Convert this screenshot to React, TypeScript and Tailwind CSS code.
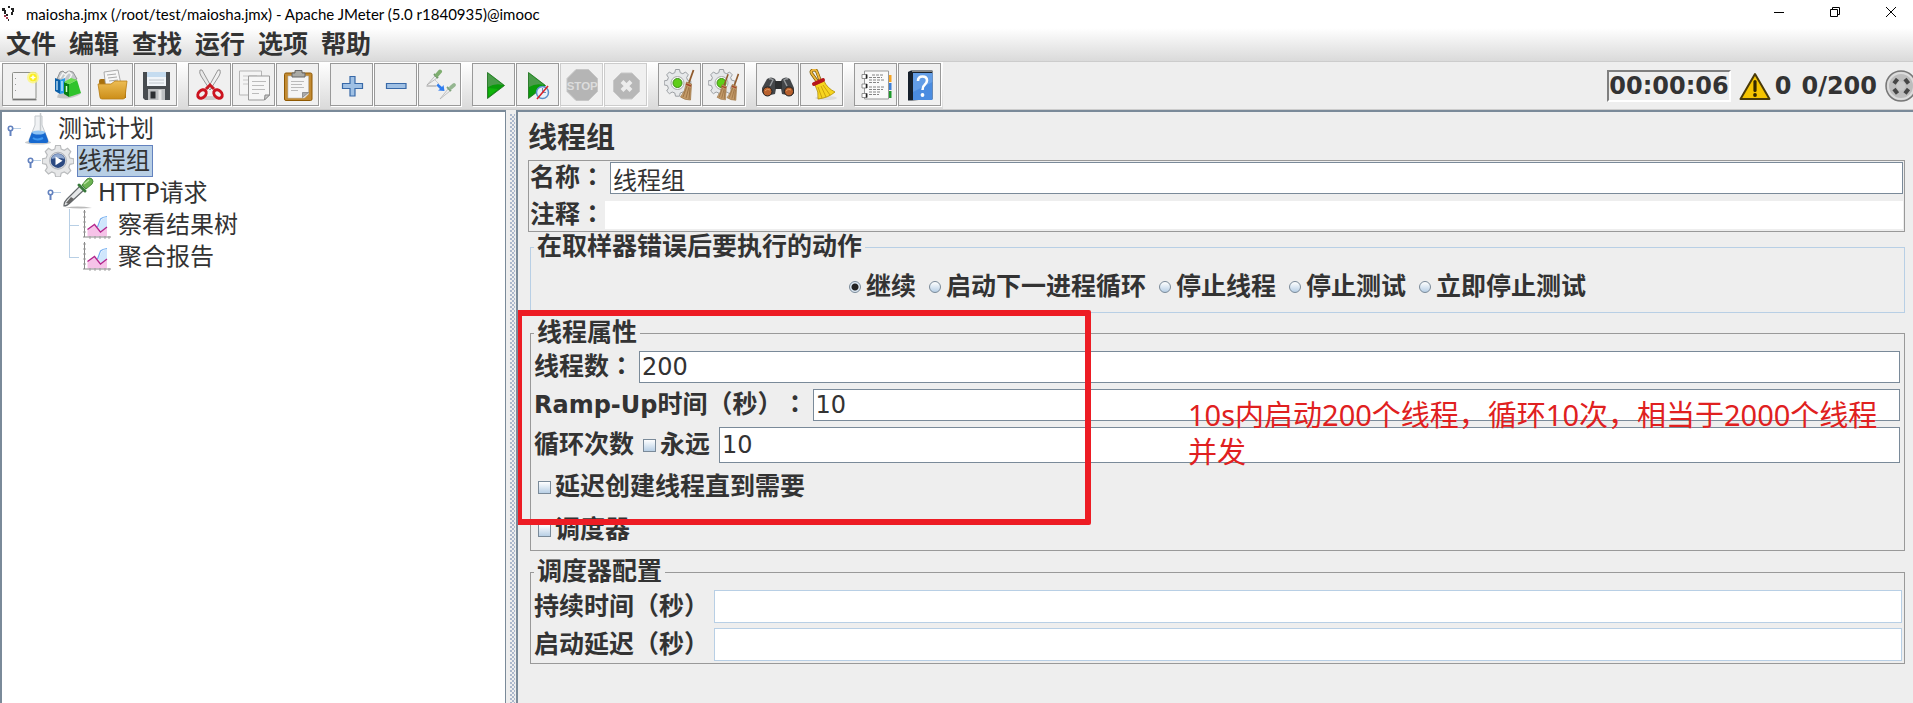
import React, { useState } from "react";

interface IconProps {
  children: React.ReactNode;
  className?: string;
}

const Icon: React.FunctionComponent<IconProps> = ({
  children,
  className = "h-8 w-8",
}) => (
  <svg viewBox="0 0 32 32" className={`${className} shrink-0`} fill="none" aria-hidden="true">
    {children}
  </svg>
);

const NewIcon = () => (
  <Icon>
    <rect x="4.5" y="3.5" width="23.5" height="26.5" rx="1" fill="#f3f3f3" stroke="#8d8f8a" />
    <path d="M4.500 30.800h24" stroke="#555" />
    <path d="M7.500 9v1M7.500 15v1M7.500 21v1" stroke="#999" />
    <circle cx="25" cy="8.500" r="6" fill="#fdf67a" opacity=".8" />
    <circle cx="25" cy="8.500" r="3.800" fill="#fbee1e" />
    <path d="m25 5.500.9 2.100 2.100.9-2.100.9-.9 2.100-.9-2.100-2.100-.9 2.100-.9z" fill="#fffef0" />
  </Icon>
);

const TemplatesIcon = () => (
  <Icon>
    <path d="M5 28.500c7 2 18 1 24-4l-3-4-20 5z" fill="#999" opacity=".5" />
    <path d="M5 10 8 3l3-1 2 2 4-2 4 1 4 7-8 4z" fill="#c4c8cb" stroke="#777" strokeWidth=".7" />
    <path d="m8 9 3-5 3 2 3-3 3 3M11 11l3-5m3 5 3-6" stroke="#f4f4f4" strokeWidth="1.500" />
    <path d="m3 9 5 2v14l-5-3z" fill="#0b5fa8" />
    <path d="m8 11 5-2v15l-5 1z" fill="#2a9be8" />
    <path d="M5 12v9m5-9v10" stroke="#d8f0ff" strokeWidth="1.200" />
    <path d="m12 13 5 2v13l-5-3z" fill="#087f12" />
    <path d="m17 15 8-4 4 13-12 4z" fill="#2fc32b" />
    <path d="m12 13 7-4 6 2-8 4z" fill="#69de4e" />
    <path d="M14.500 17v6" stroke="#d6ffd0" strokeWidth="1.500" />
  </Icon>
);

const OpenIcon = () => (
  <Icon>
    <path d="M3 12q0-2 2-2h6l2 3h15q2 0 2 2v14H4z" fill="#a8700d" />
    <path d="m8 3 14-2 4 19H10z" fill="#f7f7f7" stroke="#999" strokeWidth=".8" />
    <path d="m11 6 9-1m-8 4 9-1m-8 4 9-1" stroke="#aaa" />
    <path d="M2 15h13l4-3h12l-2 16q0 2-2 2H6q-2 0-2-2z" fill="url(#folder)" stroke="#b97f16" strokeWidth=".8" />
    <defs>
      <linearGradient id="folder" x2="0" y2="1">
        <stop stopColor="#edbd55" />
        <stop offset="1" stopColor="#cc8e18" />
      </linearGradient>
    </defs>
  </Icon>
);

const SaveIcon = () => (
  <Icon>
    <path d="M3 3h27v28H5l-2-2z" fill="#484c50" />
    <path d="M7 3h19v14H7z" fill="#f1f5f9" />
    <path d="M7 3h19v5H7z" fill="#c5dcf0" />
    <path d="M9 11h15m-15 3h15" stroke="#c2c8ce" />
    <path d="M8 20h17v11H8z" fill="#bdbfc1" />
    <path d="M10.500 22.500h5v7h-5z" fill="#2d2f32" />
    <path d="M20 21v10" stroke="#e6e6e6" strokeWidth="3" />
  </Icon>
);

const CutIcon = () => (
  <Icon>
    <ellipse cx="16" cy="29" rx="9" ry="2" fill="#ccc" />
    <path d="M6 1q-1 3 1 6l9 14 2-2L8 1z" fill="#e9e9e9" stroke="#8c8c8c" strokeWidth=".9" />
    <path d="M26 1q1 3-1 6l-9 14-2-2L24 1z" fill="#f1f1f1" stroke="#8c8c8c" strokeWidth=".9" />
    <path d="m12 20 4-4 4 4" stroke="#c81a22" strokeWidth="3" />
    <ellipse cx="8" cy="25" rx="3.500" ry="4.800" transform="rotate(45 8 25)" stroke="#cc1420" strokeWidth="3" />
    <ellipse cx="24" cy="25" rx="3.500" ry="4.800" transform="rotate(-45 24 25)" stroke="#cc1420" strokeWidth="3" />
  </Icon>
);

const CopyIcon = () => (
  <Icon>
    <path d="M1.500 2h22v24h-22z" fill="#f4f4f4" stroke="#b5b5b5" />
    <path d="M5 7h14M5 11h6M5 15h5" stroke="#c8c8c8" />
    <path d="M10.500 7h21v19l-5 5h-16z" fill="#f6f6f6" stroke="#999" />
    <path d="M14 12.500h14M14 16.500h12M14 20.500h13M14 24.500h7" stroke="#bbb" />
    <path d="m26.500 31 .5-5 4.500 0z" fill="#ccc" stroke="#888" />
  </Icon>
);

const PasteIcon = () => (
  <Icon>
    <rect x="2.500" y="4" width="27.500" height="27.500" rx="1.500" fill="#c28a32" stroke="#8f5902" />
    <path d="M6 7h20.500v18l-4 4H6z" fill="#f5f5f5" stroke="#b8b8b8" strokeWidth=".6" />
    <path d="M9 12.500h13M9 15.500h11M9 18.500h13M9 21.500h7" stroke="#bbb" />
    <path d="M20.500 28.500v-5h6z" fill="#aaa" stroke="#777" strokeWidth=".7" />
    <path d="M10 8V4h3V1.500h7V4h3v4z" fill="#aaaaa5" stroke="#666" />
  </Icon>
);

const PlusIcon = () => (
  <Icon>
    <path d="M14 7.500h5v7h7.500v5H19v7.500h-5v-7.500H6.500v-5H14z" fill="#9fc0e4" stroke="#3869a8" strokeWidth="1.200" />
  </Icon>
);

const MinusIcon = () => (
  <Icon>
    <path d="M6.500 14.500h19.500v5H6.500z" fill="#9fc0e4" stroke="#3869a8" strokeWidth="1.200" />
  </Icon>
);

const ToggleIcon = () => (
  <Icon>
    <path d="m3 16 8-9 2 2z" fill="#f4f4f4" stroke="#aaa" strokeWidth=".8" />
    <path d="m10 5 4 4" stroke="#6f9a68" strokeWidth="2" />
    <path d="m13 6 3-3.500" stroke="#7fae70" strokeWidth="4" strokeLinecap="round" />
    <path d="M2.500 17h10" stroke="#999" />
    <path d="m10 10 5 5" stroke="#ccc" />
    <path d="m14 14.500 4 3.500 1.500-2 1 6-6.500-.5 2-1.500-3.500-3.500z" fill="#2f7df0" />
    <path d="m16 30 8-10 2 2z" fill="#eee" stroke="#b5b5b5" strokeWidth=".8" />
    <path d="m23 18 4 4" stroke="#7fa37c" strokeWidth="1.800" />
    <path d="m27 18.500 3-2.500" stroke="#94b690" strokeWidth="3.600" strokeLinecap="round" />
  </Icon>
);

const PlayIcon = () => (
  <Icon>
    <path d="m9.500 3.500 17 13-17 13z" fill="#0a9c0a" stroke="#1a6b1a" strokeWidth=".8" />
    <path d="m10 4.500 15 11.500q-8-2-15 2z" fill="#4a9b4a" />
    <path d="M10.500 19v8.500L20 20z" fill="#16c60c" opacity=".6" />
  </Icon>
);

const PlayNoTimerIcon = () => (
  <Icon>
    <path d="m6.500 3.500 17 13-17 13z" fill="#0a9c0a" stroke="#1a6b1a" strokeWidth=".8" />
    <path d="m7 4.500 15 11.500q-8-2-15 2z" fill="#4a9b4a" />
    <circle cx="20.500" cy="23.500" r="6" fill="#e9f1fb" stroke="#5b8fc9" strokeWidth="1.500" />
    <path d="M20.500 19v4.500h3.500" stroke="#6b90b8" />
    <path d="m15 30 11-13" stroke="#d8232a" strokeWidth="1.600" />
  </Icon>
);

const StopIcon = () => (
  <Icon>
    <path d="M10 .5h12.500l9 9v13l-9 9H10l-9-9v-13z" fill="#b5b5b5" stroke="#c6c6c6" />
    <text x="16.200" y="20.500" fontSize="11.500" fontWeight="700" textAnchor="middle" fill="#dcdcdc" fontFamily="Liberation Sans, sans-serif">
      STOP
    </text>
  </Icon>
);

const ShutdownIcon = () => (
  <Icon>
    <path d="M11 4h11l7.500 7.500v11L22 30H11l-7.500-7.500v-11z" fill="#b7b7b7" stroke="#c8c8c8" />
    <path d="m12 12.500 9 9m0-9-9 9" stroke="#ececec" strokeWidth="4" />
  </Icon>
);

const gearPath =
  "m12 2 4 0 .7 3.200 2.600 1 2.800-1.700 2.700 2.800-1.700 2.800 1 2.600 3.200.7v4l-3.200.7-1 2.600 1.700 2.800-2.700 2.700-2.800-1.700-2.600 1-.7 3.200h-4l-.7-3.200-2.600-1-2.800 1.700-2.700-2.700 1.700-2.800-1-2.600L.7 17.400v-4l3.200-.7 1-2.600-1.700-2.800L5.900 4.500l2.800 1.700 2.600-1z";

const Broom = () => (
  <g>
    <path d="m29.500 1-5 14" stroke="#8f5a2c" strokeWidth="1.800" />
    <path d="m22.500 13 5 2-1 16q-6 0-10-3 5-6 6-15z" fill="#c39a68" stroke="#99703e" strokeWidth=".7" />
    <path d="m23 17-4 11m6-10-3 11m4-10-1 11" stroke="#8c6437" strokeWidth=".7" />
    <path d="m22 15 5 2" stroke="#a3432b" strokeWidth="1.500" />
  </g>
);

const GreenGear = () => (
  <g transform="translate(-.5 -1.500)">
    <path d={gearPath} fill="#e6e8ea" stroke="#9b9fa3" />
    <circle cx="14" cy="15.500" r="6.500" fill="#f7f7f7" stroke="#aaa" />
    <circle cx="14" cy="15.500" r="4.500" fill="#5fce18" stroke="#3d8d17" />
  </g>
);

const ClearIcon = () => (
  <Icon>
    <GreenGear />
    <Broom />
  </Icon>
);

const ClearAllIcon = () => (
  <Icon>
    <GreenGear />
    <g transform="translate(-5 4.500) scale(.85)">
      <Broom />
    </g>
    <g transform="translate(4.500 4) scale(.88)">
      <Broom />
    </g>
  </Icon>
);

const FindIcon = () => (
  <Icon>
    <path d="M5 10q4-3 8 0l2 4-2 11-9 2q-5-3-4-8z" fill="#434649" />
    <path d="M28 10q-4-3-8 0l-2 4 2 11 9 2q5-3 3-8z" fill="#434649" />
    <path d="M13 12h7v8h-7z" fill="#2c2e30" />
    <path d="M7 10q2-1 4 1l-3 6M26 10q-2-1-4 1l3 6" stroke="#96999c" strokeWidth="1.500" />
    <circle cx="5.500" cy="22.500" r="4.500" fill="#b7602d" stroke="#222" />
    <circle cx="27" cy="22.500" r="4.500" fill="#b7602d" stroke="#222" />
    <path d="M3 22q2-3 5-1m16 1q2-3 5-1" stroke="#e69a5e" />
  </Icon>
);

const YellowBroomIcon = () => (
  <Icon>
    <ellipse cx="20" cy="29" rx="11" ry="2" fill="#ddd" />
    <path d="m11 12-5-7q-2-3 1-4t4 2l3 8" stroke="#6f5200" strokeWidth="3.200" />
    <path d="m11 12-5-7q-2-3 1-4t4 2l3 8" stroke="#eeb63e" strokeWidth="2" />
    <path d="m9 16 9-4q3 7 11 11-7 6-17 7 1-7-3-14z" fill="#f6d51f" stroke="#b08d00" strokeWidth=".8" />
    <path d="m12 18 4 11m-1-12 5 11m-3-12 7 10" stroke="#c69b0a" strokeWidth=".9" />
    <path d="m8 15 9-4" stroke="#b5161c" strokeWidth="4" strokeLinecap="round" />
  </Icon>
);

const FunctionIcon = () => (
  <Icon>
    <path d="M27 6h4.500v7H27z" fill="#f4a321" />
    <path d="M27 14h4.500v7H27z" fill="#3c7fd6" />
    <path d="M27 22h4.500v7H27z" fill="#1d9a2b" />
    <path d="M4.500 2h24v28h-24z" fill="#fafafa" stroke="#999" />
    <path d="M12 6h12M9 8.500h13M9 11h16M9 13.500h10M9 18h15M9 20.500h14M9 23h12M9 25.500h10" stroke="#777" strokeDasharray="3 1" strokeWidth=".9" />
    <path d="M2 5.500h5v4H2zM2 15h5v4H2zM2 24.500h5v4H2z" fill="#fff" stroke="#777" strokeWidth=".8" />
    <path d="M6.500 5.500v4m0 5.500v4m0 5.500v4" stroke="#222" strokeWidth="1.500" />
  </Icon>
);

const HelpIcon = () => (
  <Icon>
    <path d="m4 3 3-1.500h21.500V30L8 31.500H4z" fill="#16202c" />
    <path d="M9 4h19.500v27H9z" fill="#4b8ce0" />
    <path d="M9 4h19.500v9L9 23z" fill="#73a8ea" opacity=".6" />
    <path d="M8 2.500h20" stroke="#888" />
    <path d="M14 12q0-4.500 4.500-4.500t4.500 4q0 2.500-2.500 4.500-2 1.500-2 5" stroke="#fff" strokeWidth="2.600" />
    <circle cx="18.500" cy="26" r="1.900" fill="#fff" />
  </Icon>
);

const FlaskIcon = () => (
  <Icon>
    <ellipse cx="16" cy="29.500" rx="13" ry="2" fill="#c9cccf" />
    <path d="M13 3 20 3v9l6 15q1 3-2 3H9q-3 0-2-3l6-15z" fill="#f0f2f4" stroke="#c3c8cc" />
    <path d="M10 19h13l3 8q1 3-2 3H9q-3 0-2-3z" fill="#1769cf" />
    <ellipse cx="16.500" cy="19.500" rx="6.500" ry="2" fill="#8fc4f4" />
    <path d="M18.500 0v18" stroke="#c5c9cc" strokeWidth="1.500" />
    <path d="M11 25q4 3 10 0" stroke="#3e98f0" strokeWidth="2" />
  </Icon>
);

const GearIcon = () => (
  <Icon>
    <g transform="translate(-.5 -2) scale(1.180)">
      <path d={gearPath} fill="#e6e7e8" stroke="#b9bbbd" />
    </g>
    <circle cx="16" cy="15.700" r="8.500" fill="#d6d9dd" stroke="#a0a4aa" strokeWidth=".7" />
    <circle cx="16" cy="15.700" r="7.200" fill="#2c4a82" />
    <path d="M9.500 14q1-5 6.500-5t6.500 5q-6-2-13 0z" fill="#8fa8d0" />
    <path d="m13.500 11.500 7 4.300-7 4.400z" fill="#fff" />
  </Icon>
);

const DropperIcon = () => (
  <Icon>
    <path d="M3 30.500q14-2 27 .5-14 1-27-.5z" fill="#bbb" />
    <path d="M2 28q0-3 3-6L18 9l4 4L9 25q-4 4-7 4z" fill="#e5e7e8" stroke="#65696c" strokeWidth="1.200" />
    <path d="m4 26 5-6 3 2-5 5z" fill="#666" />
    <path d="m17 8 6 6" stroke="#37783a" strokeWidth="3" strokeLinecap="round" />
    <path d="m20 8 5-6q3-2 5 0t0 5l-6 5z" fill="#6db353" stroke="#4a8b3c" />
    <path d="m22 7 5-4" stroke="#b9e3a3" strokeWidth="1.500" />
  </Icon>
);

const ChartIcon = () => (
  <Icon>
    <path d="M5.500 20 12 16l7 7 6-5v9.500H5.500z" fill="#f6c3e8" />
    <path d="m16 18 4-8 5-2v10l-6 4z" fill="#cfe6fc" />
    <path d="m15.500 18 3-8q2-2 6.500-2.500" stroke="#73aef0" strokeWidth="1.200" />
    <path d="m5.500 20.500 7-5 6 7.500 6.500-5" stroke="#b3248c" strokeWidth="1.300" />
    <path d="M2.500 1v27M1 28h28" stroke="#888" />
    <path d="M1 3h3M1 8h3M1 13h3M1 18h3M1 23h3M8 27v3M13 27v3M18 27v3M23 27v3M27 27v3" stroke="#999" strokeWidth=".9" />
  </Icon>
);

const WarningIcon = () => (
  <Icon>
    <path d="M16 4 30.500 29H1.500z" fill="#f5c400" stroke="#4a3a08" strokeWidth="2" strokeLinejoin="round" />
    <path d="M16 11.500v9" stroke="#332700" strokeWidth="3.200" strokeLinecap="round" />
    <circle cx="16" cy="25" r="1.900" fill="#332700" />
  </Icon>
);

const IdleIcon = () => (
  <Icon>
    <circle cx="16" cy="16" r="15" fill="#bdbdbd" stroke="#777" strokeWidth="1.500" />
    <circle cx="16" cy="16" r="13" stroke="#dcdcdc" strokeWidth="2" />
    <path d="m9 13.500 3.500-4.500M20 9l3.500 4.500M23.500 19 20 23.500M12.500 23.500 9 19" stroke="#464646" strokeWidth="4" />
    <circle cx="16" cy="16" r="4.500" fill="#c9c9c9" />
  </Icon>
);

const menus = ["文件", "编辑", "查找", "运行", "选项", "帮助"];

const toolGroups = [
  [
    { label: "新建", Glyph: NewIcon },
    { label: "模板", Glyph: TemplatesIcon },
    { label: "打开", Glyph: OpenIcon },
    { label: "保存", Glyph: SaveIcon },
  ],
  [
    { label: "剪切", Glyph: CutIcon },
    { label: "复制", Glyph: CopyIcon },
    { label: "粘贴", Glyph: PasteIcon },
  ],
  [
    { label: "展开", Glyph: PlusIcon },
    { label: "收起", Glyph: MinusIcon },
    { label: "切换", Glyph: ToggleIcon },
  ],
  [
    { label: "启动", Glyph: PlayIcon },
    { label: "不停顿启动", Glyph: PlayNoTimerIcon },
    { label: "停止", Glyph: StopIcon, disabled: true },
    { label: "关闭", Glyph: ShutdownIcon, disabled: true },
  ],
  [
    { label: "清除", Glyph: ClearIcon },
    { label: "清除全部", Glyph: ClearAllIcon },
  ],
  [
    { label: "搜索", Glyph: FindIcon },
    { label: "重置搜索", Glyph: YellowBroomIcon },
  ],
  [
    { label: "函数助手", Glyph: FunctionIcon },
    { label: "帮助", Glyph: HelpIcon },
  ],
];

const errorActions = ["继续", "启动下一进程循环", "停止线程", "停止测试", "立即停止测试"];

const TitleBar = () => (
  <header className="flex h-7 shrink-0 items-center bg-white pl-0.5 font-['Lato','Noto_Sans',sans-serif] text-[15px] text-black">
    <svg viewBox="0 0 16 16" className="mr-2 h-4 w-4" aria-hidden="true">
      <path d="M0 2h3v2h1v4H2V5H0zM6 0h2v2H6zM9 2h3v4h-1v3H9V6h1V4H9zM4 8h2v2H4zM6 13h1v2H6z" fill="#222" />
      <path d="M2 9h2v2H2zM4 11h2v2H4z" fill="#a3384c" />
    </svg>
    <h1>maiosha.jmx (/root/test/maiosha.jmx) - Apache JMeter (5.0 r1840935)@imooc</h1>
    <div className="ml-auto flex items-center gap-11 pr-4 pb-1">
      <button aria-label="最小化">
        <svg viewBox="0 0 12 12" className="h-3 w-3">
          <path d="M1 6.500h10" stroke="#000" />
        </svg>
      </button>
      <button aria-label="还原">
        <svg viewBox="0 0 12 12" className="h-3 w-3" fill="none">
          <path d="M1.500 3.500h7v7h-7zM3.500 3V1.500h7v7H9" stroke="#000" />
        </svg>
      </button>
      <button aria-label="关闭窗口">
        <svg viewBox="0 0 12 12" className="h-3 w-3">
          <path d="m1 1 10 10M11 1 1 11" stroke="#000" />
        </svg>
      </button>
    </div>
  </header>
);

const Toolbar = () => (
  <div className="flex h-12 shrink-0 items-stretch overflow-hidden border-b border-[#cccccc]">
    <div className="flex shrink-0 gap-[11px] bg-linear-to-b from-white to-[#dadada] px-0.5 pt-px">
      {toolGroups.map((group, index) => (
        <div key={index} className="flex gap-px">
          {group.map(({ label, Glyph, disabled }: any) => (
            <button
              key={label}
              aria-label={label}
              disabled={disabled}
              className="flex h-[43px] w-[43px] items-center justify-center border border-[#999999] bg-[#f0f0f0] shadow-[1px_1px_0_#fff] disabled:border-[#cccccc]"
            >
              <Glyph />
            </button>
          ))}
        </div>
      ))}
    </div>
    <div className="-mr-1 ml-auto flex shrink-0 items-center text-2xl font-bold">
      <div className="mr-2 border-2 border-t-[#7f7f7f] border-r-white border-b-white border-l-[#7f7f7f] leading-7">
        00:00:06
      </div>
      <WarningIcon />
      <span className="ml-1">0</span>
      <span className="mr-2 ml-2.5">0/200</span>
      <IdleIcon />
    </div>
  </div>
);

const Handle = () => (
  <svg viewBox="0 0 20 32" className="absolute inset-0 h-8 w-5" fill="none" aria-hidden="true">
    <path d="M11 15.500h8" stroke="#b8cfe5" />
    <path d="M8.500 18v5" stroke="#6382bf" strokeWidth="2" />
    <circle cx="8.500" cy="15.500" r="2.200" fill="#fff" stroke="#6382bf" strokeWidth="1.600" />
  </svg>
);

interface TreeNodeProps {
  label: string;
  Glyph: React.FunctionComponent;
  selected?: boolean;
  last?: boolean;
  children?: React.ReactNode;
}

const TreeNode: React.FunctionComponent<TreeNodeProps> = ({
  label,
  Glyph,
  selected,
  last,
  children,
}) => (
  <li>
    <div className="flex h-8 items-center">
      <div className="relative h-8 w-5 shrink-0">
        {children ? (
          <Handle />
        ) : (
          <>
            <span
              className={`absolute top-0 left-[7px] w-px bg-[#b8cfe5] ${last ? "h-4" : "h-8"}`}
            />
            <span className="absolute top-4 left-[7px] h-px w-2.5 bg-[#b8cfe5]" />
          </>
        )}
      </div>
      <Glyph />
      <button
        className={`ml-[3px] h-8 border text-2xl leading-[30px] whitespace-nowrap ${
          selected ? "border-[#6382bf] bg-[#b8cfe5] pr-0.5" : "border-transparent"
        }`}
      >
        {label}
      </button>
    </div>
    {children && <ul className="pl-5">{children}</ul>}
  </li>
);

const Check = ({ id, label }: { id: string; label: string }) => {
  const [checked, setChecked] = useState(false);
  return (
    <div className="flex h-8 items-center gap-1">
      <input
        id={id}
        type="checkbox"
        checked={checked}
        onChange={() => setChecked(!checked)}
        className="h-[13px] w-[13px] appearance-none border border-[#7a8a99] bg-linear-to-b from-white to-[#b8cfe5] checked:bg-[#333333]"
      />
      <label htmlFor={id}>{label}</label>
    </div>
  );
};

// full-width colon sits in the middle of its cell
const Colon = () => (
  <span className="font-['DejaVu_Sans','Noto_Sans_CJK_TC',sans-serif]">：</span>
);

const inputClass =
  "min-w-0 flex-1 border border-[#7a8a99] bg-white px-0.5 text-2xl font-normal leading-7 outline-none";
const emptyInputClass =
  "h-[33px] min-w-0 flex-1 border border-[#b8cfe5] bg-white px-0.5 text-2xl font-normal leading-7 outline-none";

const ThreadGroupPanel = () => {
  const [action, setAction] = useState("继续");

  return (
    <main className="relative min-w-0 flex-1 overflow-hidden border-t-2 border-l-2 border-[#7a8a99] bg-[#eeeeee] pt-2 pr-2 pl-2.5 text-[25px] leading-[30px] font-bold [text-spacing-trim:space-all]">
      <h2 className="mb-1 text-[29px] leading-9">线程组</h2>

      <div className="flex flex-col gap-1.5 border border-[#999999] p-px">
        <div className="flex items-center gap-[5px]">
          <label htmlFor="name">
            名称
            <Colon />
          </label>
          <input id="name" defaultValue="线程组" className={`${inputClass} h-8`} />
        </div>
        <div className="flex items-center">
          <label htmlFor="comment">
            注释
            <Colon />
          </label>
          <input
            id="comment"
            className="h-7 min-w-0 flex-1 bg-white px-0.5 text-2xl font-normal outline-none"
          />
        </div>
      </div>

      <fieldset className="ml-0.5 border border-[#b8cfe5]">
        <legend className="ml-[3px] px-[3px]">在取样器错误后要执行的动作</legend>
        <div className="flex items-center justify-center gap-[13px] py-2.5">
          {errorActions.map((item) => (
            <label key={item} className="flex items-center gap-[5px] whitespace-nowrap">
              <input
                type="radio"
                name="action"
                checked={action === item}
                onChange={() => setAction(item)}
                className="h-3 w-3 appearance-none rounded-full border border-[#7a8a99] bg-linear-to-b from-white to-[#b8cfe5] checked:bg-[radial-gradient(circle,#222_0_3px,#dce8f4_4px)]"
              />
              {item}
            </label>
          ))}
        </div>
      </fieldset>

      <fieldset className="mt-[5px] ml-0.5 border border-[#999999]">
        <legend className="ml-[3px] px-[3px]">线程属性</legend>
        <div className="flex flex-col gap-1.5 pt-[3px] pr-1 pl-[3px]">
          <div className="flex items-center gap-[5px]">
            <label htmlFor="threads">
              线程数
              <Colon />
            </label>
            <input id="threads" defaultValue="200" className={`${inputClass} h-8`} />
          </div>
          <div className="flex items-center gap-[5px]">
            <label htmlFor="ramp">
              <span className="text-2xl">Ramp-Up</span>时间（秒）
              <Colon />
            </label>
            <input id="ramp" defaultValue="10" className={`${inputClass} h-8`} />
          </div>
          <div className="flex items-center gap-[9px]">
            <label htmlFor="loops">循环次数</label>
            <Check id="forever" label="永远" />
            <input id="loops" defaultValue="10" className={`${inputClass} h-9`} />
          </div>
        </div>
        <div className="flex flex-col gap-[11px] pt-2 pb-1 pl-[7px]">
          <Check id="delay" label="延迟创建线程直到需要" />
          <Check id="scheduler" label="调度器" />
        </div>
      </fieldset>

      <fieldset className="mt-1.5 ml-0.5 border border-[#999999]">
        <legend className="ml-[3px] px-[3px]">调度器配置</legend>
        <div className="flex flex-col gap-[5px] pt-[3px] pr-0.5 pb-0.5 pl-[3px]">
          <div className="flex items-center gap-[5px]">
            <label htmlFor="duration">持续时间（秒）</label>
            <input id="duration" className={emptyInputClass} />
          </div>
          <div className="flex items-center gap-[5px]">
            <label htmlFor="startup">启动延迟（秒）</label>
            <input id="startup" className={emptyInputClass} />
          </div>
        </div>
      </fieldset>

      <div className="pointer-events-none absolute top-[198px] -left-0.5 h-[215px] w-[575px] rounded-xs border-6 border-[#ed1c24]" />
      <p className="pointer-events-none absolute top-[284px] left-[670px] w-[720px] font-['Noto_Sans','Noto_Sans_CJK_SC',sans-serif] text-[29px] leading-[37px] font-normal text-[#e02020]">
        10s内启动200个线程，循环10次，相当于2000个线程
        <br />
        并发
      </p>
    </main>
  );
};

const App: React.FunctionComponent = () => {
  return (
    <div className="flex h-screen flex-col overflow-hidden bg-[#eeeeee] font-['DejaVu_Sans','Noto_Sans_CJK_SC',sans-serif] text-[#333333]">
      <TitleBar />
      <nav className="flex h-[34px] shrink-0 items-center gap-[13px] border-b border-[#cccccc] bg-linear-to-b from-white to-[#dadada] pl-1.5 text-[25px] leading-8 font-bold">
        {menus.map((menu) => (
          <button key={menu}>{menu}</button>
        ))}
      </nav>
      <Toolbar />
      <div className="flex min-h-0 flex-1">
        <aside className="w-[506px] shrink-0 overflow-hidden border-t-2 border-r border-l-2 border-[#7a8a99] bg-white">
          <ul className="pt-px">
            <TreeNode label="测试计划" Glyph={FlaskIcon}>
              <TreeNode label="线程组" Glyph={GearIcon} selected>
                <TreeNode label="HTTP请求" Glyph={DropperIcon}>
                  <TreeNode label="察看结果树" Glyph={ChartIcon} />
                  <TreeNode label="聚合报告" Glyph={ChartIcon} last />
                </TreeNode>
              </TreeNode>
            </TreeNode>
          </ul>
        </aside>
        <div className="w-2.5 shrink-0 bg-[#eeeeee] pt-1 pr-px pl-1">
          <div className="h-full bg-[radial-gradient(circle_at_1px_1px,#a9b6cb_0.7px,transparent_1px),radial-gradient(circle_at_3px_3px,#a9b6cb_0.7px,transparent_1px)] bg-[size:4px_4px]" />
        </div>
        <ThreadGroupPanel />
      </div>
    </div>
  );
};

export default App;
